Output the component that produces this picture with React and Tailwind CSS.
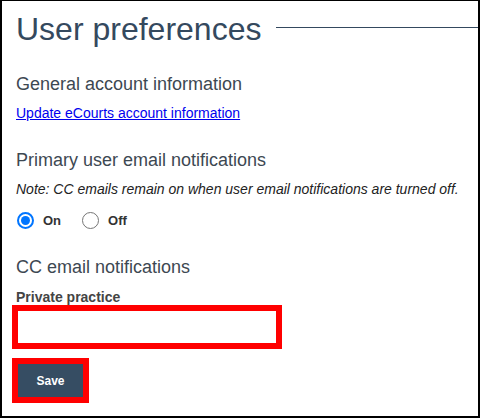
export default function App() {
  return (
    <div
      className="w-[480px] h-[418px] bg-white border-l-2 border-r-2 border-t border-b-2 border-black flex flex-col overflow-hidden"
      style={{ fontFamily: '"Liberation Sans", Arial, sans-serif' }}
    >
      <div className="flex items-start mt-[9px] pl-[14px]">
        <h1 className="text-[32px] leading-[38px] text-[#34495e] font-normal whitespace-nowrap">
          User preferences
        </h1>
        <div className="flex-1 h-px bg-[#34495e] mt-[17px] ml-[15px]" />
      </div>

      <div className="flex flex-col pl-[14px]">
        <h2 className="mt-[25px] text-[18px] leading-[22px] text-[#3d4852] font-normal">
          General account information
        </h2>
        <a href="#" className="mt-[10px] text-[14px] leading-[17px] text-[#0000ee] underline w-fit">
          Update eCourts account information
        </a>

        <h2 className="mt-[27px] text-[18px] leading-[22px] text-[#3d4852] font-normal">
          Primary user email notifications
        </h2>
        <p className="mt-[10px] text-[14px] leading-[17px] italic text-[#222]">
          Note: CC emails remain on when user email notifications are turned off.
        </p>

        <div className="mt-[14px] flex items-center h-[17px] pl-px">
          <span className="w-[17px] h-[17px] rounded-full border-2 border-[#0075ff] flex items-center justify-center">
            <span className="w-[9px] h-[9px] rounded-full bg-[#0075ff]" />
          </span>
          <span className="ml-[9px] text-[13px] font-bold text-[#333]">On</span>
          <span className="ml-[21px] w-[17px] h-[17px] rounded-full border border-[#767676]" />
          <span className="ml-[9px] text-[13px] font-bold text-[#333]">Off</span>
        </div>

        <h2 className="mt-[27px] text-[18px] leading-[22px] text-[#3d4852] font-normal">
          CC email notifications
        </h2>
        <label className="mt-[11px] text-[14px] leading-[17px] font-bold text-[#444]">
          Private practice
        </label>
        <div className="mt-[5px] ml-[2px] w-[258px] h-[32px] bg-white outline-[6px] outline-solid outline-[#ff0000]" />

        <button className="mt-[21px] ml-[2px] w-[65px] h-[33px] bg-[#364d63] text-white text-[12px] font-bold outline-[6px] outline-solid outline-[#ff0000]">
          Save
        </button>
      </div>
    </div>
  );
}
